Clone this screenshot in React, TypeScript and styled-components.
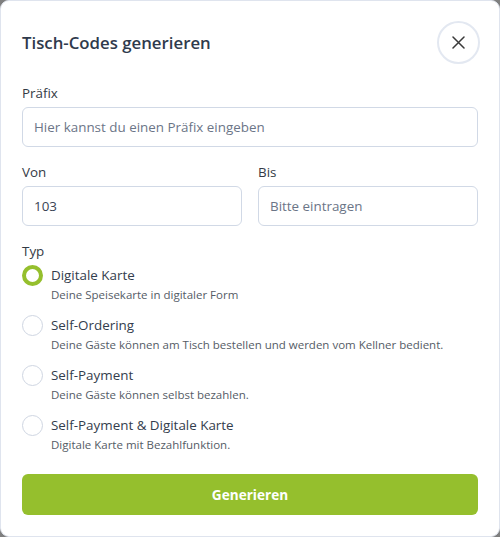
import React, { useState } from "react";
import styled, { createGlobalStyle } from "styled-components";

const Global = createGlobalStyle`
  html, body { margin: 0; padding: 0; background: #7f7f7f; }
  body { font-family: "Open Sans", "Noto Sans", sans-serif; }
  * { box-sizing: border-box; }
`;

const Dialog = styled.div`
  width: 500px;
  height: 537px;
  background: #fff;
  border: 1px solid #dfe4ee;
  border-radius: 9px;
  padding: 19px 21px 0 21px;
  display: flex;
  flex-direction: column;
`;

const Header = styled.div`
  display: flex;
  align-items: center;
  justify-content: space-between;
  height: 44px;
`;

const Title = styled.h2`
  margin: 0;
  font-size: 16.8px;
  font-weight: 600;
  color: #2f3a4c;
`;

const CloseButton = styled.button`
  width: 43px;
  height: 43px;
  border-radius: 50%;
  border: 2px solid #e3e8f1;
  background: #fff;
  display: flex;
  align-items: center;
  justify-content: center;
  padding: 0;
  margin-right: -2px;
  color: #3a3a3a;
  cursor: pointer;
`;

const Field = styled.div`
  display: flex;
  flex-direction: column;
`;

const Label = styled.label`
  font-size: 13.4px;
  color: #333a45;
  line-height: 20px;
  margin-bottom: 4px;
`;

const Input = styled.input`
  height: 40px;
  width: 100%;
  border: 1px solid #d1d9e6;
  border-radius: 6px;
  padding: 0 11px;
  font-family: inherit;
  font-size: 13.4px;
  color: #3a4454;
  outline: none;
  &::placeholder { color: #6b7587; }
`;

const Row = styled.div`
  display: grid;
  grid-template-columns: 1fr 1fr;
  gap: 16px;
`;

const Section = styled.div<{ $top: number }>`
  margin-top: ${(p) => p.$top}px;
`;

const RadioList = styled.div`
  display: flex;
  flex-direction: column;
  gap: 10px;
`;

const RadioItem = styled.label`
  display: flex;
  gap: 8px;
  cursor: pointer;
`;

const Circle = styled.span<{ $checked: boolean }>`
  width: 21px;
  height: 21px;
  flex: none;
  border-radius: 50%;
  border: ${(p) => (p.$checked ? "4px solid #95bf2d" : "1px solid #cfd6e2")};
  background: #fff;
`;

const RadioText = styled.div`
  display: flex;
  flex-direction: column;
`;

const RadioTitle = styled.span`
  font-size: 13.4px;
  line-height: 20px;
  color: #333d4d;
`;

const RadioDesc = styled.span`
  font-size: 11.5px;
  line-height: 20px;
  color: #555c66;
`;

const Submit = styled.button`
  margin-top: 19px;
  height: 41px;
  width: 100%;
  border: none;
  border-radius: 6px;
  background: #95bf2d;
  color: #fff;
  font-family: inherit;
  font-size: 13.6px;
  font-weight: 700;
  cursor: pointer;
`;

const options = [
  { title: "Digitale Karte", desc: "Deine Speisekarte in digitaler Form" },
  { title: "Self-Ordering", desc: "Deine Gäste können am Tisch bestellen und werden vom Kellner bedient." },
  { title: "Self-Payment", desc: "Deine Gäste können selbst bezahlen." },
  { title: "Self-Payment & Digitale Karte", desc: "Digitale Karte mit Bezahlfunktion." },
];

export default function App() {
  const [sel, setSel] = useState(0);
  return (
    <>
      <Global />
      <Dialog>
        <Header>
          <Title>Tisch-Codes generieren</Title>
          <CloseButton aria-label="Schließen">
            <svg width="13" height="13" viewBox="0 0 13 13" fill="none" stroke="currentColor" strokeWidth="1.5" strokeLinecap="round">
              <path d="M1 1L12 12M12 1L1 12" />
            </svg>
          </CloseButton>
        </Header>
        <Section $top={19}>
          <Field>
            <Label>Präfix</Label>
            <Input placeholder="Hier kannst du einen Präfix eingeben" />
          </Field>
        </Section>
        <Section $top={15}>
          <Row>
            <Field>
              <Label>Von</Label>
              <Input defaultValue="103" />
            </Field>
            <Field>
              <Label>Bis</Label>
              <Input placeholder="Bitte eintragen" />
            </Field>
          </Row>
        </Section>
        <Section $top={15}>
          <Label as="div">Typ</Label>
          <RadioList>
            {options.map((o, i) => (
              <RadioItem key={o.title} onClick={() => setSel(i)}>
                <Circle $checked={sel === i} />
                <RadioText>
                  <RadioTitle>{o.title}</RadioTitle>
                  <RadioDesc>{o.desc}</RadioDesc>
                </RadioText>
              </RadioItem>
            ))}
          </RadioList>
        </Section>
        <Submit>Generieren</Submit>
      </Dialog>
    </>
  );
}
